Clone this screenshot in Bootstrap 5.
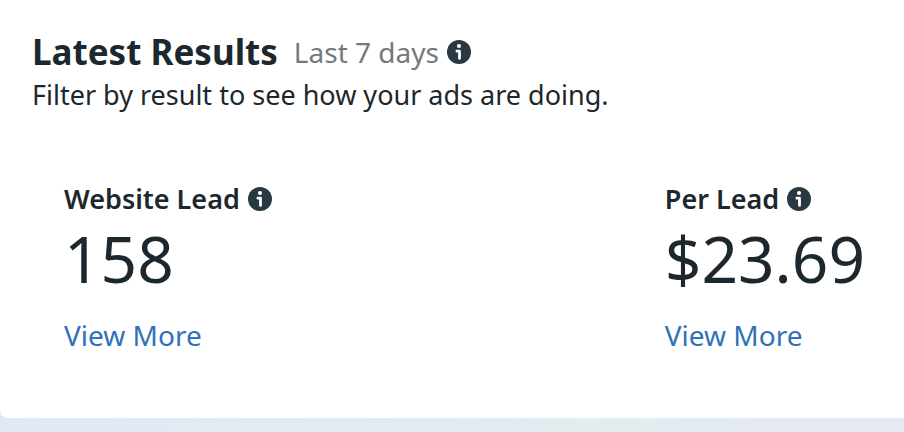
<!DOCTYPE html>
<html lang="en">
<head>
<meta charset="utf-8">
<meta name="viewport" content="width=device-width, initial-scale=1">
<title>Latest Results</title>
<link href="https://cdn.jsdelivr.net/npm/bootstrap@5.3.0/dist/css/bootstrap.min.css" rel="stylesheet">
<style>
body{font-family:"Noto Sans","Open Sans",sans-serif;color:#1c282e;background:linear-gradient(90deg,#e0eaf4 0%,#e0ebf4 45%,#e1edf0 65%,#e4eaf3 85%)}
.results-card{padding:32px 32px 63px;border-radius:0 0 0 8px;margin-bottom:14px}
.title{font-size:35px;line-height:40px;font-weight:700}
.period{font-size:28px;line-height:40px;color:#75797c}
.intro{font-size:27px;line-height:46px}
.metrics{padding:61px 7px 0 32px}
.metric-name{font-size:27px;line-height:40px;font-weight:600}
.metric-value{font-size:64px;line-height:80px}
.metric-link{font-size:28px;line-height:40px;color:#2f72b8}
.info-btn{width:24px;height:24px;color:#283943}
</style>
<script src="https://cdn.jsdelivr.net/npm/bootstrap@5.3.0/dist/js/bootstrap.bundle.min.js" defer></script>
</head>
<body>
<svg class="d-none" aria-hidden="true"><symbol id="info" viewBox="0 0 24 24"><circle cx="12" cy="12" r="12" fill="currentColor"/><circle cx="12" cy="6" r="2.1" fill="#fff"/><path d="M9.8 9.8h2.7q1.4 0 1.4 1.4v7.3q0 1.2-1.4 1.2t-1.4-1.2v-6H9.8q-1.3 0-1.3-1.35T9.8 9.8z" fill="#fff"/></symbol></svg>
<main class="results-card bg-white">
<header>
<div class="d-flex align-items-center">
<h1 class="title mb-0 me-3">Latest Results</h1><span class="period me-2">Last 7 days</span>
<button type="button" class="info-btn btn p-0 border-0 d-flex" aria-label="About this period"><svg width="24" height="24"><use href="#info"/></svg></button>
</div>
<p class="intro mb-0">Filter by result to see how your ads are doing.</p>
</header>
<div class="metrics d-flex justify-content-between">
<section>
<div class="d-flex align-items-center gap-2"><h2 class="metric-name mb-0">Website Lead</h2><button type="button" class="info-btn btn p-0 border-0 d-flex" aria-label="About website leads"><svg width="24" height="24"><use href="#info"/></svg></button></div>
<div class="metric-value mb-3">158</div>
<a href="#" class="metric-link d-block text-decoration-none">View More</a>
</section>
<section>
<div class="d-flex align-items-center gap-2"><h2 class="metric-name mb-0">Per Lead</h2><button type="button" class="info-btn btn p-0 border-0 d-flex" aria-label="About cost per lead"><svg width="24" height="24"><use href="#info"/></svg></button></div>
<div class="metric-value mb-3">$23.69</div>
<a href="#" class="metric-link d-block text-decoration-none">View More</a>
</section>
</div>
</main>
</body>
</html>
